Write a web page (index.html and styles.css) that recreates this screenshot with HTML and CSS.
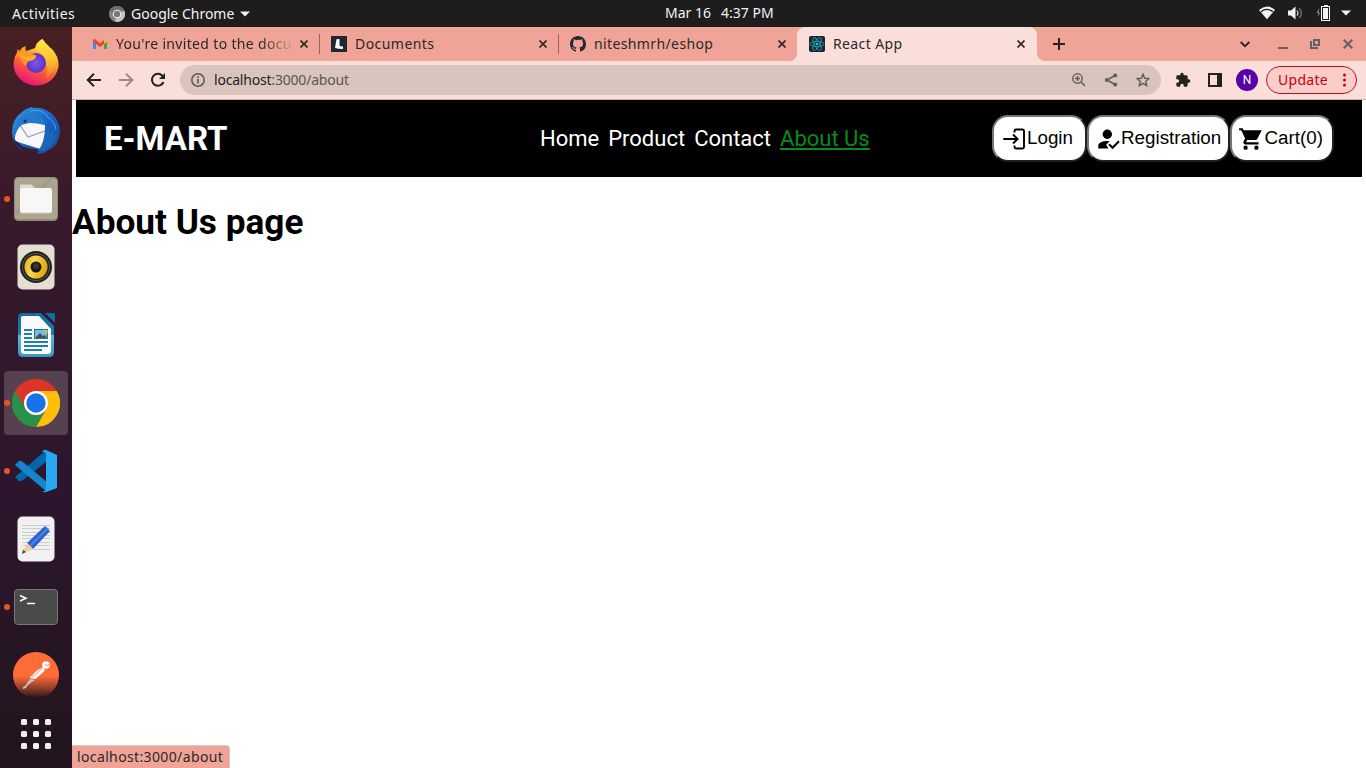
FILE: index.html
```html
<!DOCTYPE html>
<html lang="en">
<head>
<meta charset="utf-8">
<title>React App</title>
<link rel="stylesheet" href="styles.css">
</head>
<body>
<header class="topbar">
  <span class="activities">Activities</span>
  <svg class="app-icon" width="16" height="16" viewBox="0 0 16 16"><circle cx="8" cy="8" r="8" fill="#858585"/><path d="M8 8L15.500 5A8 8 0 0 1 8 16L6 15z" fill="#c4c4c4"/><path d="M8 4h7A8 8 0 0 0 1.200 3.800L4.500 10z" fill="#6d6d6d"/><circle cx="8" cy="8" r="4.300" fill="#f0f0f0"/><circle cx="8" cy="8" r="3.200" fill="#777"/></svg>
  <span class="app-name">Google Chrome</span>
  <svg class="app-caret" width="10" height="6" viewBox="0 0 10 6"><path d="M0 .5h10L5 5.500z" fill="#f2f2f2"/></svg>
  <span class="date">Mar 16</span>
  <span class="time">4:37 PM</span>
  <div class="tray">
    <svg width="16" height="14" viewBox="0 0 16 14"><path d="M0 4Q8-3 16 4L8 13.300z" fill="#f2f2f2"/><path d="M2 5.700q6-4.600 12 0" fill="none" stroke="#1d1d1d" stroke-width="1.200"/></svg>
    <svg width="15" height="14" viewBox="0 0 15 14"><path d="M0 4.500h3L7.500.5v13L3 9.500H0z" fill="#f2f2f2"/><path d="M9 4.300q2 2.700 0 5.400" stroke="#bbb" fill="none" stroke-width="1.300"/><path d="M11.300 2.300q4.200 4.700 0 9.400" stroke="#777" fill="none" stroke-width="1.300"/></svg>
    <svg width="15" height="16" viewBox="0 0 15 16"><path d="M3.300 3L.5 8h2L1.600 12.500 4.400 7.500H2.600z" fill="#888"/><path d="M8 0h4v1h2v15H5V1h3z" fill="#f2f2f2"/><path d="M6 2h7v13H6z" fill="#1d1d1d"/><path d="M7 3h5v11H7z" fill="#f2f2f2"/></svg>
    <svg class="tray-caret" width="10" height="6" viewBox="0 0 10 6"><path d="M0 .5h10L5 5.500z" fill="#f2f2f2"/></svg>
  </div>
</header>
<div class="desktop">
  <nav class="dock">
    <div class="dock-item firefox">
      <svg width="48" height="48" viewBox="0 0 48 48"><defs><linearGradient id="ff" x1=".8" y1="0" x2=".35" y2="1"><stop offset="0" stop-color="#fff04a"/><stop offset=".35" stop-color="#ffb32b"/><stop offset=".65" stop-color="#ff5a38"/><stop offset="1" stop-color="#e5127c"/></linearGradient><linearGradient id="ffy" x2="0" y2="1"><stop stop-color="#ffe747"/><stop offset=".5" stop-color="#ffc62f"/><stop offset="1" stop-color="#ff7139"/></linearGradient><radialGradient id="ffg"><stop offset="0" stop-color="#8152f5"/><stop offset="1" stop-color="#5a36bd"/></radialGradient></defs><path d="M30.500 1q3.200 5 6 7 1.500 1 1.500 4 0-1 1-2 8 8 7.600 18C45 39 36 47.500 24.500 47.500S2 39 1.700 27q-.2-7 3.300-12.500L5.500 11l2 2Q10 9 13.500 8q-.5 3 .5 5 4-1 9-3 1-6 7.500-9z" fill="url(#ff)"/><path d="M30.500 1q3 5 6 7 8 7 7 18-1 8-9 14 2-12-3-22-5-5-8-6 1-8 7-11z" fill="url(#ffy)"/><circle cx="24" cy="25" r="10" fill="url(#ffg)"/><path d="M2.500 21Q5 14 9 14l5-1q4 3 10 4 1 3-5 5-4 1-5 6Q10 25 7 18q-3 1-4.500 3z" fill="#ff9726"/><path d="M5 12q2 6 9 7l9-1q2 3-5 5-6-1-10-5z" fill="#ffaf26"/></svg>
    </div>
    <div class="dock-item">
      <svg width="48" height="48" viewBox="0 0 48 48"><defs><linearGradient id="tb" x2="1" y2="1"><stop stop-color="#3398dc"/><stop offset=".55" stop-color="#1761c2"/><stop offset="1" stop-color="#164b9f"/></linearGradient></defs><path d="M17 1q3-2 4 0 10-1 18 5 9 8 9 19-1 14-13 19-6 4-10 2l3-3Q8 40 3 36q5 3 8 8Q0 38 0 25 0 12 10 5q3-3 7-4z" fill="url(#tb)"/><path d="M3 29Q7 17 13 17q9-3 20 1v22l-1 3Q15 38 3 34z" fill="#f7f7fa"/><path d="M8 18l8 12 17-6" fill="none" stroke="#9b9ca9" stroke-width="1.200"/><path d="M5 22Q4 13 11 9q9-5 17 1 5 3 5 8-8-2-15-2-8-1-13 6z" fill="#2479ca"/><path d="M33 20q0 15-7 24l9-2q9-7 11-17l-5 5 1-9-5 7v-7z" fill="#1c66b8"/><path d="M18 4q10-3 18 5M35 10q8 4 9 13" stroke="#4ba3dc" fill="none"/><circle cx="13" cy="14" r="1.500" fill="#172c57"/><path d="M4 34q5 3 8 9Q4 41 1 31z" fill="#271b57"/></svg>
    </div>
    <div class="dock-item running">
      <svg width="48" height="48" viewBox="0 0 48 48"><rect x="2" y="2" width="44" height="44" rx="4.500" fill="#928c7b"/><rect x="3" y="3" width="42" height="41" rx="3.500" fill="#aaa491"/><path d="M3 38L38 3h4L3 42z" fill="#9f9986"/><path d="M8 11q0-1.500 1.500-1.500h10L23 13v10H8z" fill="#dedace"/><rect x="8" y="13" width="32" height="25" rx="2.500" fill="#f7f7f5"/><path d="M9 38h30" stroke="#d2cebf"/></svg>
    </div>
    <div class="dock-item">
      <svg width="48" height="48" viewBox="0 0 48 48"><defs><linearGradient id="sp" x2="1" y2=".3"><stop stop-color="#e0aa18"/><stop offset=".45" stop-color="#f8d64b"/><stop offset="1" stop-color="#e1a90f"/></linearGradient></defs><rect x="5.500" y="1.500" width="37" height="45" rx="5" fill="#e5dfd2"/><circle cx="24" cy="24" r="16" fill="#222224"/><circle cx="24" cy="24" r="14" fill="#57534a"/><circle cx="24" cy="24" r="13" fill="#222"/><circle cx="24" cy="24" r="11.500" fill="url(#sp)"/><circle cx="24" cy="24" r="5.500" fill="#171719"/><circle cx="24" cy="23" r="3" fill="#353638"/></svg>
    </div>
    <div class="dock-item">
      <svg width="48" height="48" viewBox="0 0 48 48"><defs><linearGradient id="wr" x2="0" y2="1"><stop stop-color="#126b9e"/><stop offset=".5" stop-color="#1c7eb2"/><stop offset=".51" stop-color="#62b6dc"/><stop offset="1" stop-color="#3795c5"/></linearGradient></defs><path d="M10 2h19l13 13v26q0 5-5 5H11q-5 0-5-5V6q0-4 4-4z" fill="url(#wr)"/><path d="M33 2h8q2 0 2 2v8z" fill="#0f6e9e"/><path d="M11 5h16l12 13v22q0 3-3 3H12q-3 0-3-3V7q0-2 2-2z" fill="#fafafa"/><path d="M12 19h8M12 23h8M12 27h8M12 31h24M12 35h24M12 39h18" stroke="#1e7eaf" stroke-width="2"/><rect x="22.500" y="18.500" width="13" height="9" fill="#75bedf" stroke="#1575a5"/><path d="M23 27l5-5 3 3 2-1 2 3z" fill="#4f4f4f"/><path d="M31.500 19h4v4z" fill="#f4c91d"/></svg>
    </div>
    <div class="dock-item running active">
      <svg width="48" height="48" viewBox="0 0 48 48"><circle cx="24" cy="24" r="24" fill="#dc3527"/><path d="M24 12h20.800A24 24 0 0 1 24 48l10.400-18z" fill="#fdbf0b"/><path d="M3.200 12l10.400 18A12 12 0 0 0 34.400 30L24 48A24 24 0 0 1 3.200 12z" fill="#279249"/><circle cx="24" cy="24" r="12" fill="#fff"/><circle cx="24" cy="24" r="9.700" fill="#1b72e8"/></svg>
    </div>
    <div class="dock-item running">
      <svg width="48" height="48" viewBox="0 0 48 48"><path d="M3 30l4 4q2 1 4-1L34 15V3z" fill="#0067ac"/><path d="M3 18l4-4q2-1 4 1l24 20v10z" fill="#1485cc"/><path d="M34 3l11 5v33L34 45q-2 1-4-1 4 1 4-3V8q0-4-4-3 2-3 4-2z" fill="#28a8f2"/></svg>
    </div>
    <div class="dock-item">
      <svg width="48" height="48" viewBox="0 0 48 48"><rect x="5.500" y="1.500" width="37" height="45" rx="5" fill="#f1f1f1"/><path d="M10 10.500h28M10 13.500h28M10 17.500h28M10 20.500h28M10 23.500h28M10 27.500h28M10 30.500h28M10 34.500h28" stroke="#cbcbcb"/><path d="M15 28L33 11l5 5-17 18z" fill="#2c61d0"/><path d="M18 31l18-18" stroke="#4b82ec" stroke-width="2"/><path d="M15 28l6 6-11 5z" fill="#f3caa2"/><path d="M11 35l3 2-4 2z" fill="#4a453f"/></svg>
    </div>
    <div class="dock-item running">
      <div class="terminal"><svg width="20" height="14" viewBox="0 0 20 14"><path d="M2 2.500l6 2.700L2 8" stroke="#fff" stroke-width="1.500" fill="none"/><path d="M9 10.500h8" stroke="#fff" stroke-width="1.500"/></svg></div>
    </div>
    <div class="dock-item">
      <svg width="48" height="48" viewBox="0 0 48 48"><defs><linearGradient id="pm" x2="0" y2="1"><stop offset=".52" stop-color="#ff6c37"/><stop offset=".78" stop-color="#943f28"/><stop offset="1" stop-color="#27171d"/></linearGradient></defs><circle cx="24" cy="24" r="23" fill="url(#pm)"/><circle cx="34" cy="14" r="3.800" fill="#fff"/><path d="M31 16q2 1 1.500 4l-9 8-6-1 2-2q5-6 11.500-9z" fill="#fff"/><path d="M18 28l5 1q-5 3-8 6l-1 2-3 1v-2l2-1z" fill="#c9c0c0"/><path d="M20 26q7-5 10-9" stroke="#ff6c37" fill="none" stroke-width=".8"/><path d="M33 13l3 2 1-2" stroke="#ff6c37" fill="none" stroke-width=".8"/></svg>
    </div>
    <div class="apps"><i></i><i></i><i></i><i></i><i></i><i></i><i></i><i></i><i></i></div>
  </nav>
  <main class="browser">
    <div class="tabs">
      <div class="tab tab-mail">
        <svg class="favicon" width="16" height="16" viewBox="0 0 16 16"><path d="M1 4v9h3V7z" fill="#4285f4"/><path d="M12 7v6h3V4z" fill="#34a853"/><path d="M1 4q1-2 3 0l4 3.200L12 4v4L8 11 1 5.500z" fill="#ea4335"/><path d="M12 4q2-2 3 0v2l-3 2z" fill="#fbbc04"/></svg>
        <span class="title t-mail">You're invited to the docu</span>
        <svg class="close" width="8" height="8" viewBox="0 0 8 8"><path d="M.5.5l7 7m0-7l-7 7"/></svg>
      </div>
      <div class="tab tab-docs">
        <svg class="favicon" width="16" height="16" viewBox="0 0 16 16"><path fill="#22272f" d="M0 0h16v16H0z"/><path d="M5.500 3.300L8.500 3v7l3.500.5V13l-4.500-.2L4 12z" fill="#fff"/></svg>
        <span class="title t-docs">Documents</span>
        <svg class="close" width="8" height="8" viewBox="0 0 8 8"><path d="M.5.5l7 7m0-7l-7 7"/></svg>
      </div>
      <div class="tab tab-git">
        <svg class="favicon" width="16" height="16" viewBox="0 0 16 16"><path fill="#24292f" d="M8 0C3.580 0 0 3.580 0 8c0 3.540 2.290 6.530 5.470 7.590.4.070.550-.17.550-.380 0-.190-.010-.820-.010-1.490-2.010.370-2.530-.490-2.690-.940-.090-.230-.480-.940-.820-1.130-.280-.150-.680-.520-.010-.530.630-.010 1.080.580 1.230.820.720 1.210 1.870.870 2.330.660.070-.520.280-.870.510-1.070-1.780-.2-3.640-.890-3.640-3.950 0-.870.310-1.590.820-2.150-.080-.2-.360-1.020.080-2.120 0 0 .670-.210 2.200.820A7.500 7.500 0 0 1 8 3.860c.680 0 1.360.090 2 .270 1.530-1.040 2.200-.820 2.200-.820.440 1.100.160 1.920.080 2.120.510.560.820 1.270.820 2.150 0 3.070-1.870 3.750-3.650 3.950.290.250.540.730.540 1.480 0 1.070-.010 1.930-.010 2.200 0 .210.150.460.550.380A8 8 0 0 0 16 8c0-4.420-3.580-8-8-8z"/></svg>
        <span class="title t-git">niteshmrh/eshop</span>
        <svg class="close" width="8" height="8" viewBox="0 0 8 8"><path d="M.5.5l7 7m0-7l-7 7"/></svg>
      </div>
      <div class="tab tab-react">
        <svg class="favicon" width="16" height="16" viewBox="0 0 16 16"><rect width="16" height="16" rx="2" fill="#20232a"/><g fill="none" stroke="#149fb6" stroke-width=".9"><ellipse cx="8" cy="8" rx="7" ry="2.700"/><ellipse cx="8" cy="8" rx="7" ry="2.700" transform="rotate(60 8 8)"/><ellipse cx="8" cy="8" rx="7" ry="2.700" transform="rotate(120 8 8)"/></g><circle cx="8" cy="8" r="1.300" fill="#16c8e8"/></svg>
        <span class="title t-react">React App</span>
        <svg class="close" width="8" height="8" viewBox="0 0 8 8"><path d="M.5.5l7 7m0-7l-7 7"/></svg>
      </div>
      <div class="tab-corner"><div class="tab-end">
        <svg width="12" height="12" viewBox="0 0 12 12"><path d="M6 0v12M0 6h12" stroke="#222" stroke-width="2"/></svg>
        <svg class="chevron" width="10" height="7" viewBox="0 0 10 7"><path d="M.7 1L5 5.300 9.300 1" stroke="#222" stroke-width="1.800" fill="none"/></svg>
        <svg class="minimize" width="10" height="10" viewBox="0 0 10 10"><path d="M0 9h10" stroke="#706264" stroke-width="2"/></svg>
        <svg class="restore" width="10" height="10" viewBox="0 0 10 10"><path d="M4 1h5v5H4zM1 2v7h7" stroke="#616165" stroke-width="2" fill="none"/></svg>
        <svg class="winclose" width="10" height="10" viewBox="0 0 10 10"><path d="M.7.7l8.600 8.600m0-8.600L.7 9.300" stroke="#616165" stroke-width="2"/></svg>
      </div></div>
    </div>
    <div class="toolbar">
      <svg class="back" width="16" height="16" viewBox="0 0 16 16"><path d="M15 8H2m6-6.300L1.700 8 8 14.300" stroke="#222" stroke-width="2" fill="none"/></svg>
      <svg class="forward" width="16" height="16" viewBox="0 0 16 16"><path d="M1 8h13M8 1.700L14.300 8 8 14.300" stroke="#9e8b89" stroke-width="2" fill="none"/></svg>
      <svg class="reload" width="16" height="16" viewBox="0 0 16 16"><path d="M13.500 10a6 6 0 1 1-1-6.200L14 5.300" stroke="#222" stroke-width="2" fill="none"/><path d="M15 1v6H9z" fill="#222"/></svg>
      <div class="address">
        <svg class="info" width="14" height="14" viewBox="0 0 14 14"><circle cx="7" cy="7" r="6.200" fill="none" stroke="#5e5555" stroke-width="1.500"/><path d="M7 6v4.500M7 3.300v1.600" stroke="#5e5555" stroke-width="1.600"/></svg>
        <span class="url">localhost<span class="path">:3000/about</span></span>
        <svg class="zoom-icon" width="14" height="14" viewBox="0 0 14 14"><circle cx="5.500" cy="5.500" r="4.700" fill="none" stroke="#665b5b" stroke-width="1.400"/><path d="M9 9l4 4M5.500 3v5M3 5.500h5" stroke="#665b5b" stroke-width="1.500"/></svg>
        <svg class="share" width="14" height="14" viewBox="0 0 14 14"><path d="M11 2.500L3 7l8 4.500" fill="none" stroke="#665b5b" stroke-width="1.500"/><g fill="#665b5b"><circle cx="11.200" cy="2.500" r="2"/><circle cx="2.800" cy="7" r="2"/><circle cx="11.200" cy="11.500" r="2"/></g></svg>
        <svg class="star" width="14" height="14" viewBox="0 0 14 14"><path d="M7 1.300l1.700 4 4.200.3-3.200 2.800 1 4.200L7 10.300l-3.700 2.300 1-4.200-3.200-2.800 4.200-.3z" fill="none" stroke="#665b5b" stroke-width="1.400"/></svg>
      </div>
      <svg class="puzzle" width="16" height="16" viewBox="0 0 24 24"><path fill="#222" d="M20.500 11H19V7a2 2 0 0 0-2-2h-4V3.500a2.500 2.500 0 0 0-5 0V5H4a2 2 0 0 0-2 2v3.800h1.500a2.700 2.700 0 0 1 0 5.400H2V20a2 2 0 0 0 2 2h3.800v-1.500a2.700 2.700 0 0 1 5.400 0V22H17a2 2 0 0 0 2-2v-4h1.500a2.500 2.500 0 0 0 0-5z"/></svg>
      <svg class="panel" width="14" height="14" viewBox="0 0 14 14"><path d="M0 0h14v14H0z" fill="#222"/><path d="M2 2h7v10H2z" fill="#faded9"/></svg>
      <div class="avatar">N</div>
      <div class="update"><span>Update</span><svg width="3" height="14" viewBox="0 0 3 14"><g fill="#d40000"><circle cx="1.500" cy="2" r="1.500"/><circle cx="1.500" cy="7" r="1.500"/><circle cx="1.500" cy="12" r="1.500"/></g></svg></div>
    </div>
    <section class="page">
      <div class="navbar">
        <div class="brand">E-MART</div>
        <div class="links"><a>Home</a><a>Product</a><a>Contact</a><a class="current">About Us</a></div>
        <div class="actions">
          <button class="login"><svg width="24" height="24" viewBox="0 0 24 24"><path d="M12.500 5.500V4q0-1.500 1.500-1.500h6.500Q22 2.500 22 4v16q0 1.500-1.500 1.500H14q-1.500 0-1.500-1.500v-1.500" fill="none" stroke="#000" stroke-width="1.900"/><path d="M1.300 12H15.500M11 7.500l4.600 4.500-4.600 4.500" fill="none" stroke="#000" stroke-width="1.900"/></svg>Login</button>
          <button class="register"><svg width="24" height="24" viewBox="0 0 24 24"><circle cx="10.300" cy="7.300" r="4.700"/><path d="M1.300 21.500v-3.200c0-2.300 4-4.300 9-4.300q1.500 0 2.400.3L9.200 17.800l2.300 3.700z"/><path d="M12 17.300l3.600 3.400 6.400-6.400" fill="none" stroke="#000" stroke-width="2.100"/></svg>Registration</button>
          <button class="cart"><svg width="26" height="26" viewBox="0 0 24 24"><path d="M7 18a2 2 0 1 0 0 4 2 2 0 0 0 0-4zM1 2v2h2l3.600 7.600-1.400 2.400C4.500 15.400 5.500 17 7 17h12v-2H7.400l1.100-2h7.500c.7 0 1.400-.4 1.700-1L22 4H5.200l-.9-2zm16 16a2 2 0 1 0 0 4 2 2 0 0 0 0-4z"/></svg>Cart(0)</button>
        </div>
      </div>
      <h1>About Us page</h1>
    </section>
    <div class="status"><span>localhost:3000/about</span></div>
  </main>
</div>
</body>
</html>
```
FILE: styles.css
```css
* { box-sizing: border-box; }
body { margin: 0; width: 1366px; height: 768px; overflow: hidden; background: #fff; font: 14px/20px "Noto Sans", sans-serif; color: #292929; }
svg { display: block; flex: none; }
span { white-space: nowrap; }
.topbar { height: 27px; background: #1d1d1d; color: #f2f2f2; display: flex; align-items: center; padding-left: 12px; }
.activities { width: 97px; letter-spacing: .5px; }
.app-icon { margin-right: 6px; }
.app-name { width: 109px; }
.app-caret { margin-right: 415px; }
.date { width: 56px; padding-bottom: 1px; }
.time { width: 53px; padding-bottom: 1px; }
.tray { display: flex; align-items: center; gap: 13px; margin: -1px 0 0 485px; }
.tray-caret { margin-left: -3px; }
.desktop { display: flex; height: 741px; }
.dock { width: 72px; background: linear-gradient(#482023, #36192c 28%, #2c162d 65%, #22151d); padding-top: 2px; flex: none; }
.dock-item { height: 68px; display: flex; align-items: center; justify-content: center; position: relative; }
.firefox { padding-bottom: 2px; }
.active::before { content: ""; position: absolute; inset: 2px 4px; background: #55414f; border-radius: 4px; }
.dock-item > svg { position: relative; }
.running::after { content: ""; position: absolute; left: 4px; top: 31px; width: 6px; height: 6px; border-radius: 50%; background: #e95420; }
.terminal { width: 44px; height: 36px; border-radius: 4px; background: #4a4a49; border: 1px solid #777; padding: 3px; }
.apps { display: grid; grid-template-columns: repeat(3, 6px); grid-auto-rows: 6px; gap: 6px; margin: 10px 0 0 21px; }
.apps i { background: #f4f2f2; border-radius: 1.5px; }
.browser { width: 1294px; display: flex; flex-direction: column; }
.tabs { height: 34px; background: #f0a497; display: flex; flex: none; }
.tab { display: flex; align-items: center; height: 34px; position: relative; }
.tab-mail { width: 248px; padding: 0 12px 0 20px; }
.tab-docs { width: 239px; padding: 0 12px 0 11px; }
.tab-git { width: 238px; padding: 0 11px; background: radial-gradient(circle at 0 0, #f0a497 8px, #faded9 8.5px) right bottom / 8px 8px no-repeat; }
.tab-react { width: 240px; padding: 0 12px; background: #faded9; border-radius: 8px 8px 0 0; }
.tab-mail::after, .tab-docs::after { content: ""; position: absolute; right: 0; top: 7px; width: 1px; height: 20px; background: #9d625b; }
.favicon { margin-right: 8px; }
.title { flex: 1; overflow: hidden; letter-spacing: .38px; }
.t-mail { letter-spacing: .33px; margin-right: 7px; mask-image: linear-gradient(90deg, #000 145px, transparent 178px); }
.t-docs { letter-spacing: .45px; }
.close path { stroke: #332828; stroke-width: 1.7; fill: none; }
.tab-corner { flex: 1; background: linear-gradient(#f0a497 50%, #faded9 50%); }
.tab-end { height: 34px; display: flex; align-items: center; padding-left: 16px; background: #f0a497; border-bottom-left-radius: 8px; }
.chevron { margin-left: 175px; }
.minimize { margin-left: 28px; }
.restore { margin-left: 22px; }
.winclose { margin-left: 23px; }
.toolbar { height: 39px; background: #faded9; border-bottom: 1px solid #c9b1ae; display: flex; align-items: center; padding-left: 14px; flex: none; }
.forward { margin-left: 16px; }
.reload { margin: 0 14px 0 16px; }
.address { width: 981px; height: 30px; border-radius: 15px; background: #dac5be; display: flex; align-items: center; padding-left: 11px; }
.info { margin-right: 9px; }
.url { width: 858px; color: #222; letter-spacing: -.2px; }
.path { color: #5d5353; }
.share { margin-left: 18px; }
.star { margin-left: 18px; }
.puzzle { margin-left: 14px; }
.panel { margin-left: 17px; }
.avatar { width: 22px; height: 22px; border-radius: 50%; background: #5900a7; color: #fff; font: 12px/22px Roboto, sans-serif; text-align: center; margin-left: 14px; }
.update { width: 91px; height: 28px; border: 1px solid #cd0d0d; border-radius: 14px; background: #f9ceca; color: #c90000; margin-left: 8px; display: flex; align-items: center; padding-left: 11px; }
.update span { width: 65px; letter-spacing: .3px; }
.page { flex: 1; background: #fff; font-family: Roboto, sans-serif; }
.navbar { height: 77px; background: #000; margin: 0 4px; display: flex; align-items: center; padding-left: 28px; }
.brand { width: 436px; font-size: 33px; line-height: 40px; font-weight: 700; color: #fff; padding-top: 1px; }
.links { width: 452px; display: flex; gap: 9px; font-size: 22px; line-height: 28px; color: #fff; }
.current { color: #078c19; text-decoration: underline; }
.actions { display: flex; }
.actions button { height: 47px; border: 2px solid; border-color: #767676 #212121 #212121 #767676; border-radius: 16px; background: #fff; color: #000; font: 18.8px/24px "Liberation Sans", Arial, sans-serif; display: flex; align-items: center; padding: 0 0 1px 8px; white-space: nowrap; }
.actions svg { margin-top: 1px; }
.actions .login { width: 95px; }
.login svg { margin-right: 1px; }
.actions .register { width: 143px; }
.actions .cart { width: 104px; padding-left: 6px; }
.cart svg { margin-right: .5px; }
h1 { margin: 24px 0 0; font-size: 35.2px; line-height: 42px; font-weight: 700; color: #000; }
.status { width: 158px; height: 23px; background: #f0a497; border: 1px solid #dfc6c0; border-width: 1px 1px 0 0; border-top-right-radius: 4px; padding: 1px 0 0 5px; flex: none; letter-spacing: .37px; }
```
